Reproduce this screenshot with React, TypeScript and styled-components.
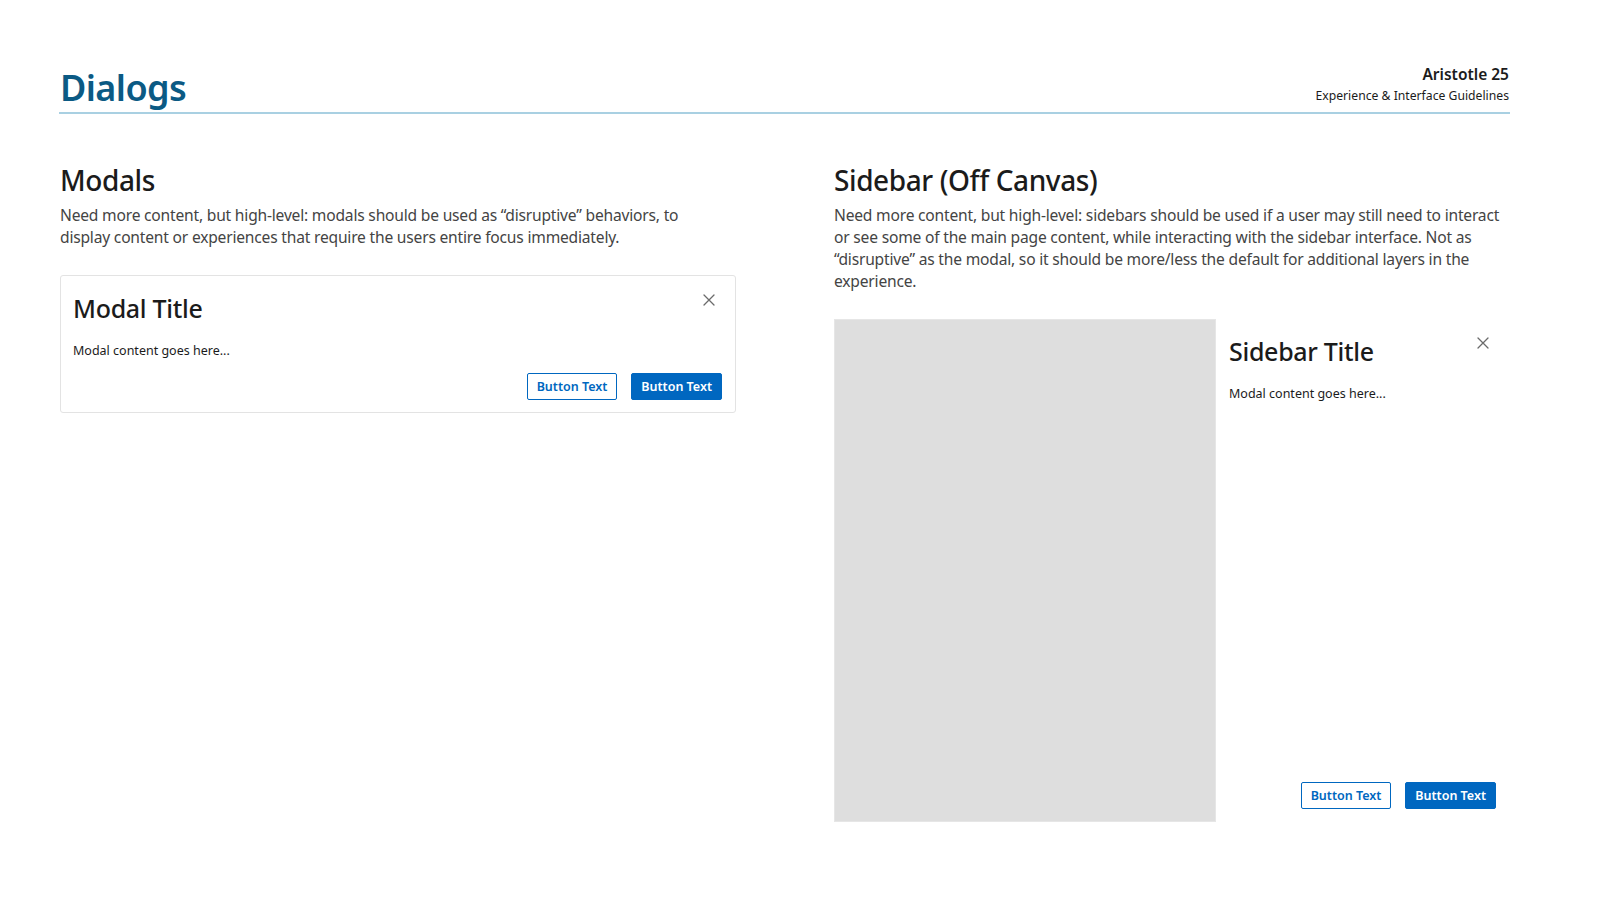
import React from "react";
import styled, { createGlobalStyle } from "styled-components";

const GlobalStyle = createGlobalStyle`
  html, body {
    margin: 0;
    padding: 0;
    background: #ffffff;
  }
  body {
    font-family: "Noto Sans", "Open Sans", sans-serif;
    color: #1b1b1b;
  }
`;

const palette = {
  brand: "#0b5a84",
  rule: "#a9d0e2",
  text: "#1b1b1b",
  body: "#444444",
  primary: "#0067c0",
  border: "#e3e3e3",
  canvas: "#dedede",
  icon: "#6b6b6b",
};

const Page = styled.main`
  width: 1600px;
  height: 900px;
  box-sizing: border-box;
  padding: 58px 90px 0 59px;
`;

const Header = styled.header`
  display: flex;
  justify-content: space-between;
  align-items: flex-end;
  border-bottom: 2px solid ${palette.rule};
  padding: 0 1px 5px 1px;
  height: 56px;
  box-sizing: border-box;

  h1 {
    margin: 0 0 -4px;
    font-size: 36px;
    font-weight: 600;
    color: ${palette.brand};
    letter-spacing: -0.6px;
    line-height: 46px;
  }

  .brand {
    text-align: right;

    strong {
      display: block;
      font-size: 15.5px;
      font-weight: 600;
      line-height: 22px;
    }

    span {
      display: block;
      font-size: 12.2px;
      line-height: 22px;
    }
  }
`;

const Columns = styled.div`
  display: grid;
  grid-template-columns: 676px 676px;
  justify-content: space-between;
  padding: 47px 0 0 1px;
`;

const Section = styled.section`
  display: flex;
  flex-direction: column;

  h2 {
    margin: 0;
    font-size: 28px;
    font-weight: 500;
    line-height: 38px;
    letter-spacing: -0.4px;
  }
`;

const Description = styled.p<{ $maxWidth?: number }>`
  margin: 5px 0 27px;
  max-width: ${(p) => (p.$maxWidth ? `${p.$maxWidth}px` : "none")};
  font-size: 15.6px;
  line-height: 22px;
  color: ${palette.body};
  letter-spacing: -0.2px;
`;

const ModalCard = styled.div`
  border: 1px solid ${palette.border};
  border-radius: 3px;
  padding: 14px 13px 12px 12px;
  display: flex;
  flex-direction: column;
`;

const DialogHead = styled.div`
  display: flex;
  justify-content: space-between;
  align-items: flex-start;

  h3 {
    margin: 0;
    font-size: 25px;
    font-weight: 500;
    line-height: 36px;
    letter-spacing: -0.3px;
  }
`;

const CloseButton = styled.button`
  border: 0;
  background: none;
  padding: 0;
  margin: 3px 6px 0 0;
  width: 14px;
  height: 14px;
  display: flex;
  cursor: pointer;
`;

const Content = styled.div`
  font-size: 12.5px;
  line-height: 18px;
  margin-top: 16px;
`;

const Actions = styled.div`
  display: flex;
  justify-content: flex-end;
  gap: 14px;
  margin-top: 13px;
`;

const Button = styled.button<{ $primary?: boolean }>`
  height: 27px;
  padding: 0 9px;
  box-sizing: border-box;
  border-radius: 2px;
  font-family: inherit;
  font-size: 12.5px;
  font-weight: 600;
  border: 1px solid ${palette.primary};
  background: ${(p) => (p.$primary ? palette.primary : "#ffffff")};
  color: ${(p) => (p.$primary ? "#ffffff" : palette.primary)};
  cursor: pointer;
`;

const SidebarDemo = styled.div`
  display: grid;
  grid-template-columns: 382px 1fr;
  height: 503px;
`;

const PageCanvas = styled.div`
  background: ${palette.canvas};
  border: 1px solid #e6e6e6;
`;

const SidebarPanel = styled.aside`
  display: flex;
  flex-direction: column;
  padding: 14px 14px 13px 13px;

  ${Actions} {
    margin-top: auto;
  }
`;

function CloseIcon() {
  return (
    <svg width="14" height="14" viewBox="0 0 14 14">
      <path
        d="M2 2 L12 12 M12 2 L2 12"
        stroke={palette.icon}
        strokeWidth="1.3"
        strokeLinecap="round"
      />
    </svg>
  );
}

function DialogActions() {
  return (
    <Actions>
      <Button>Button Text</Button>
      <Button $primary>Button Text</Button>
    </Actions>
  );
}

export default function App() {
  return (
    <>
      <GlobalStyle />
      <Page>
        <Header>
          <h1>Dialogs</h1>
          <div className="brand">
            <strong>Aristotle 25</strong>
            <span>Experience &amp; Interface Guidelines</span>
          </div>
        </Header>
        <Columns>
          <Section>
            <h2>Modals</h2>
            <Description $maxWidth={645}>
              Need more content, but high-level: modals should be used as
              “disruptive” behaviors, to display content or experiences that
              require the users entire focus immediately.
            </Description>
            <ModalCard>
              <DialogHead>
                <h3>Modal Title</h3>
                <CloseButton aria-label="Close">
                  <CloseIcon />
                </CloseButton>
              </DialogHead>
              <Content>Modal content goes here...</Content>
              <DialogActions />
            </ModalCard>
          </Section>
          <Section>
            <h2>Sidebar (Off Canvas)</h2>
            <Description>
              Need more content, but high-level: sidebars should be used if a
              user may still need to interact or see some of the main page
              content, while interacting with the sidebar interface. Not as
              “disruptive” as the modal, so it should be more/less the default
              for additional layers in the experience.
            </Description>
            <SidebarDemo>
              <PageCanvas />
              <SidebarPanel>
                <DialogHead>
                  <h3>Sidebar Title</h3>
                  <CloseButton aria-label="Close">
                    <CloseIcon />
                  </CloseButton>
                </DialogHead>
                <Content>Modal content goes here...</Content>
                <DialogActions />
              </SidebarPanel>
            </SidebarDemo>
          </Section>
        </Columns>
      </Page>
    </>
  );
}
